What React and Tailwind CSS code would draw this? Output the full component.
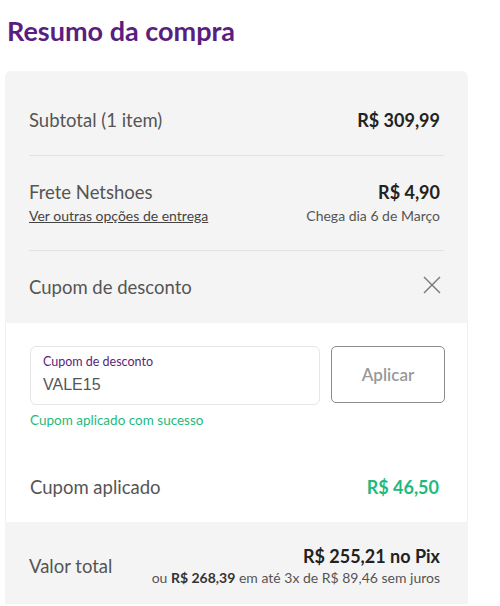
export default function App() {
  return (
    <div className="w-[500px] h-[606px] bg-white overflow-hidden font-['Lato',sans-serif]">
      {/* Title */}
      <h1 className="pl-[7px] pt-[15px] text-[27px] leading-8 font-bold text-[#5a1e7e]">Resumo da compra</h1>

      {/* Card */}
      <div className="ml-[5px] mt-[24px] w-[463px] bg-[#f4f4f4] rounded-t-[6px]">
        <div className="px-6">
          <div className="flex items-center justify-between pr-1 pt-[37px] pb-[23px] border-b border-[#e2e2e2]">
            <span className="text-[18.5px] leading-6 text-[#555]">Subtotal (1 item)</span>
            <span className="text-[18px] leading-6 font-bold text-[#222]">R$ 309,99</span>
          </div>

          <div className="flex justify-between pr-1 pt-[24px] pb-[24px] border-b border-[#e2e2e2]">
            <div className="flex flex-col gap-[2px]">
              <span className="text-[18.5px] leading-6 text-[#555]">Frete Netshoes</span>
              <a href="#" className="text-[14px] leading-5 text-[#444] underline">Ver outras opções de entrega</a>
            </div>
            <div className="flex flex-col items-end gap-[2px]">
              <span className="text-[18px] leading-6 font-bold text-[#222]">R$ 4,90</span>
              <span className="text-[14px] leading-5 text-[#555]">Chega dia 6 de Março</span>
            </div>
          </div>

          <div className="flex items-center justify-between pr-[3px] pt-[24px] pb-[24px]">
            <span className="text-[18.5px] leading-6 text-[#555]">Cupom de desconto</span>
            <svg width="18" height="18" viewBox="0 0 18 18" className="text-[#777] -mt-[4px]">
              <path d="M1 1L17 17M17 1L1 17" stroke="currentColor" strokeWidth="1.4" fill="none" />
            </svg>
          </div>
        </div>

        {/* Coupon panel */}
        <div className="bg-white border-x border-[#f0f0f0] pl-6 pr-[22px] pt-[23px] pb-[23px]">
          <div className="flex gap-[11px]">
            <div className="flex-1 h-[59px] border border-[#e6e6e6] rounded-[6px] px-3 pt-[7px]">
              <div className="text-[12.5px] leading-4 text-[#5a1e7e]">Cupom de desconto</div>
              <div className="mt-[5px] text-[16px] leading-5 text-[#555] font-['Liberation_Sans',sans-serif]">VALE15</div>
            </div>
            <button className="w-[114px] h-[57px] border-[1.5px] border-[#8c8c8c] rounded-[5px] text-[17px] font-semibold text-[#999]">Aplicar</button>
          </div>
          <div className="mt-[7px] text-[13.5px] leading-4 text-[#1fba7c]">Cupom aplicado com sucesso</div>
          <div className="mt-[47px] flex items-center justify-between pr-[6px]">
            <span className="text-[18.5px] leading-6 text-[#555]">Cupom aplicado</span>
            <span className="text-[18px] leading-6 font-bold text-[#1fba7c]">R$ 46,50</span>
          </div>
        </div>

        {/* Total */}
        <div className="flex items-center justify-between pl-6 pr-7 pt-[22px] pb-[16px]">
          <span className="text-[18.5px] leading-6 text-[#555]">Valor total</span>
          <div className="flex flex-col items-end">
            <span className="text-[18px] leading-6 font-bold text-[#222]">R$ 255,21 no Pix</span>
            <span className="text-[14px] leading-5 text-[#555]">
              ou <span className="font-bold text-[#333]">R$ 268,39</span> em até 3x de R$ 89,46 sem juros
            </span>
          </div>
        </div>
      </div>
    </div>
  );
}
